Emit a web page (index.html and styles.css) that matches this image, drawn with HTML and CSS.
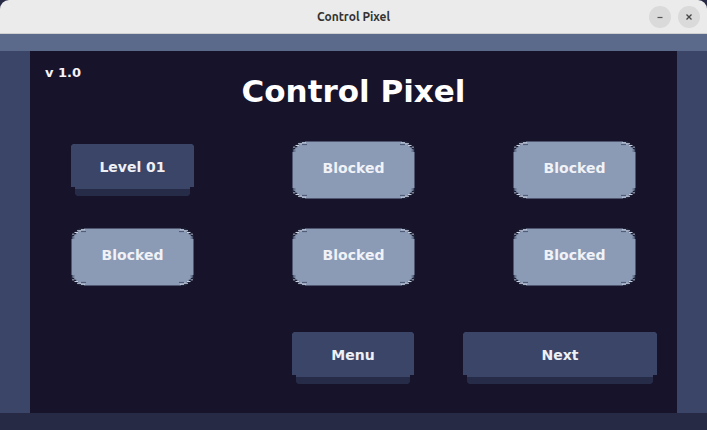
FILE: index.html
```html
<!DOCTYPE html>
<html>
<head>
<meta charset="utf-8">
<link rel="stylesheet" href="styles.css">
</head>
<body>
<div class="window">
  <div class="titlebar">
    <span class="wtitle">Control Pixel</span>
    <div class="wbtns">
      <span class="wbtn"><svg width="10" height="10" viewBox="0 0 10 10"><path d="M2.5 5.5h5" stroke="#555" stroke-width="1.2"/></svg></span>
      <span class="wbtn"><svg width="10" height="10" viewBox="0 0 10 10"><path d="M2.5 2.5l5 5M7.5 2.5l-5 5" stroke="#444" stroke-width="1.3"/></svg></span>
    </div>
  </div>
  <div class="band-top"></div>
  <div class="middle">
    <div class="side"></div>
    <div class="inner">
      <div class="header">
        <span class="version">v 1.0</span>
        <h1 class="title">Control Pixel</h1>
        <span></span>
      </div>
      <div class="levels">
        <div class="cell"><div class="btn"><span class="btn-face">Level 01</span></div></div>
        <div class="cell"><div class="blocked"><svg class="deco" viewBox="0 0 123 58" preserveAspectRatio="none"><use href="#blk"/></svg><span>Blocked</span></div></div>
        <div class="cell"><div class="blocked"><svg class="deco" viewBox="0 0 123 58" preserveAspectRatio="none"><use href="#blk"/></svg><span>Blocked</span></div></div>
        <div class="cell"><div class="blocked"><svg class="deco" viewBox="0 0 123 58" preserveAspectRatio="none"><use href="#blk"/></svg><span>Blocked</span></div></div>
        <div class="cell"><div class="blocked"><svg class="deco" viewBox="0 0 123 58" preserveAspectRatio="none"><use href="#blk"/></svg><span>Blocked</span></div></div>
        <div class="cell"><div class="blocked"><svg class="deco" viewBox="0 0 123 58" preserveAspectRatio="none"><use href="#blk"/></svg><span>Blocked</span></div></div>
      </div>
      <div class="actions">
        <div class="btn btn-menu"><span class="btn-face">Menu</span></div>
        <div class="btn btn-next"><span class="btn-face">Next</span></div>
      </div>
    </div>
    <div class="side"></div>
  </div>
  <div class="band-bottom"></div>
</div>
<svg width="0" height="0" class="defs">
  <defs>
    <g id="corner">
      <path d="M0.75,11 V7.5 H2.5 V5.5 H4.5 V3.5 H6.5 V2 H9 V0.75 H13" fill="none" stroke="#1c2036" stroke-width="1.5"/>
      <path d="M2,7 V5.5 M3.5,4.5 H7 M6,2.8 H10 M10,1.8 H14" stroke="#c9d0de" stroke-width="1.1"/>
      <path d="M1.6,10 H3.5 M10,3.6 H15" stroke="#4a5572" stroke-width="1"/>
    </g>
    <g id="blk">
      <polygon points="9,0.5 114,0.5 122.5,8 122.5,50 114,57.5 9,57.5 0.5,50 0.5,8" fill="#8b9ab5"/>
      <use href="#corner"/>
      <use href="#corner" transform="translate(123 0) scale(-1 1)"/>
      <use href="#corner" transform="translate(0 58) scale(1 -1)"/>
      <use href="#corner" transform="translate(123 58) scale(-1 -1)"/>
    </g>
  </defs>
</svg>
</body>
</html>
```
FILE: styles.css
```css
html, body {
  margin: 0;
  padding: 0;
  background: #262a45;
}
.window {
  width: 707px;
  height: 430px;
  display: flex;
  flex-direction: column;
  overflow: hidden;
  font-family: "DejaVu Sans", "Noto Sans", sans-serif;
}
.defs {
  position: absolute;
}
.titlebar {
  height: 34px;
  background: #ebebeb;
  border-radius: 9px 9px 0 0;
  display: flex;
  align-items: center;
  justify-content: center;
  position: relative;
  border-bottom: 1px solid #d0d0d0;
  box-sizing: border-box;
}
.wtitle {
  font-family: "Ubuntu", "Noto Sans", sans-serif;
  font-weight: 700;
  font-size: 12px;
  color: #333;
}
.wbtns {
  position: absolute;
  right: 7px;
  top: 6px;
  display: flex;
  gap: 7px;
}
.wbtn {
  width: 22px;
  height: 22px;
  border-radius: 50%;
  background: #dadada;
  display: flex;
  align-items: center;
  justify-content: center;
}
.band-top {
  height: 17px;
  background: #5b6a8a;
}
.middle {
  height: 362px;
  display: flex;
}
.side {
  width: 30px;
  background: #3b4567;
}
.inner {
  flex: 1;
  background: #17132a;
  display: flex;
  flex-direction: column;
}
.band-bottom {
  height: 17px;
  background: #262a45;
}
.header {
  display: grid;
  grid-template-columns: 1fr auto 1fr;
  align-items: start;
  padding: 0 15px;
  height: 90px;
}
.version {
  color: #f4f4f8;
  font-size: 13px;
  font-weight: 700;
  margin-top: 14px;
}
.title {
  margin: 21px 0 0;
  font-size: 31px;
  font-weight: 700;
  color: #ffffff;
  line-height: 38px;
}
.levels {
  display: grid;
  grid-template-columns: repeat(3, 123px);
  grid-auto-rows: 58px;
  column-gap: 98px;
  row-gap: 29px;
  padding-left: 41px;
}
.cell {
  display: flex;
  align-items: center;
}
.btn {
  width: 123px;
  height: 52px;
  background: #262b48;
  position: relative;
  clip-path: polygon(2px 0, calc(100% - 2px) 0, 100% 2px, 100% calc(100% - 9px), calc(100% - 4px) calc(100% - 9px), calc(100% - 4px) calc(100% - 2px), calc(100% - 6px) 100%, 6px 100%, 4px calc(100% - 2px), 4px calc(100% - 9px), 0 calc(100% - 9px), 0 2px);
}
.btn-face {
  display: flex;
  align-items: center;
  justify-content: center;
  height: 45px;
  background: #3b4567;
  color: #eef0f5;
  font-size: 14px;
  font-weight: 700;
}
.blocked {
  width: 123px;
  height: 58px;
  position: relative;
  display: flex;
  align-items: center;
  justify-content: center;
}
.deco {
  position: absolute;
  inset: 0;
  width: 100%;
  height: 100%;
}
.blocked span {
  position: relative;
  color: #f0f2f7;
  font-size: 14px;
  font-weight: 700;
  margin-top: -5px;
}
.actions {
  display: flex;
  justify-content: flex-end;
  gap: 49px;
  padding-right: 20px;
  margin-top: 46px;
}
.btn-menu {
  width: 122px;
}
.btn-next {
  width: 194px;
}
```
